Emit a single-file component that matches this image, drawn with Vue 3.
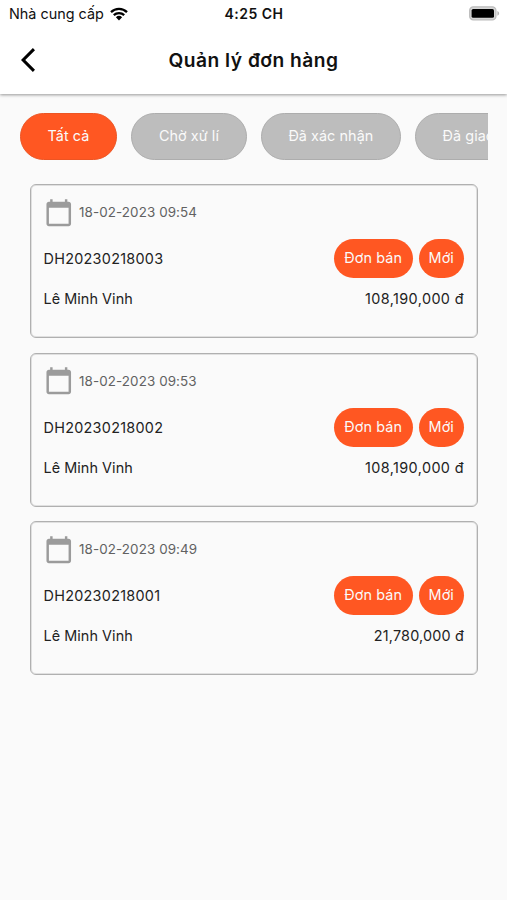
<script setup>
const filters = [
  { label: 'Tất cả', width: 97, active: true },
  { label: 'Chờ xử lí', width: 115.5 },
  { label: 'Đã xác nhận', width: 140 },
  { label: 'Đã giao', width: 107 }
]
const orders = [
  { date: '18-02-2023 09:54', code: 'DH20230218003', customer: 'Lê Minh Vinh', total: '108,190,000 đ' },
  { date: '18-02-2023 09:53', code: 'DH20230218002', customer: 'Lê Minh Vinh', total: '108,190,000 đ' },
  { date: '18-02-2023 09:49', code: 'DH20230218001', customer: 'Lê Minh Vinh', total: '21,780,000 đ' }
]
</script>

<template>
  <div class="screen">
    <header class="top">
      <div class="status">
        <div class="carrier">
          <span class="carrier-name">Nhà cung cấp</span>
          <svg class="wifi" viewBox="0 0 18 14">
            <path d="M1 5.1a11.6 11.6 0 0 1 16 0M3.8 8.1a7.6 7.6 0 0 1 10.4 0" fill="none" stroke="#000" stroke-width="2.3" />
            <path d="M5.9 10.3a4.5 4.5 0 0 1 6.2 0L9 13.4z" />
          </svg>
        </div>
        <span class="clock">4:25 CH</span>
        <div class="power">
          <svg class="battery" viewBox="0 0 31 15">
            <rect x=".7" y=".8" width="26.2" height="13" rx="3.6" fill="#d6d6d6" stroke="#bcbcbc" stroke-width="1.3" />
            <rect x="2.6" y="2.9" width="22.4" height="8.9" rx="1.6" />
            <path d="M28.4 5c2.3.8 2.3 3.9 0 4.7z" fill="#b5b5b5" />
          </svg>
        </div>
      </div>
      <div class="bar">
        <svg class="back" viewBox="0 2.1 11.67 19.8"><path d="M11.67 3.87 9.9 2.1 0 12l9.9 9.9 1.77-1.77L3.54 12z" /></svg>
        <h1 class="title">Quản lý đơn hàng</h1>
      </div>
    </header>

    <nav class="filters">
      <button v-for="f in filters" :key="f.label" class="filter" :class="{ active: f.active }" :style="{ width: f.width + 'px' }">{{ f.label }}</button>
    </nav>

    <main class="orders">
      <article v-for="o in orders" :key="o.code" class="order">
        <div class="date-row">
          <svg class="calendar" viewBox="0 0 24 24"><path d="M20 3h-1V1h-2v2H7V1H5v2H4c-1.1 0-2 .9-2 2v16c0 1.1.9 2 2 2h16c1.1 0 2-.9 2-2V5c0-1.1-.9-2-2-2zm0 18H4V8h16v13z" /></svg>
          <span class="date">{{ o.date }}</span>
        </div>
        <div class="code-row">
          <span class="code">{{ o.code }}</span>
          <span class="tag sale">Đơn bán</span>
          <span class="tag fresh">Mới</span>
        </div>
        <div class="total-row">
          <span class="customer">{{ o.customer }}</span>
          <span class="total">{{ o.total }}</span>
        </div>
      </article>
    </main>
  </div>
</template>

<style>
body {
  background: #fafafa;
}
</style>

<style scoped>
.screen {
  box-sizing: border-box;
  height: 900px;
  overflow: hidden;
  background: #fafafa;
  color: #222;
  font-family: Inter, "Liberation Sans", sans-serif;
  font-size: 14.4px;
  white-space: nowrap;
}
.top {
  height: 94px;
  background: #fff;
  box-shadow: 0 1px 3px rgba(0, 0, 0, 0.4);
}
.status {
  display: grid;
  grid-template-columns: 1fr auto 1fr;
  align-items: center;
  height: 27px;
  padding: 0 7px 0 9px;
  color: #111;
}
.carrier {
  display: flex;
  align-items: center;
  gap: 6px;
}
.carrier-name {
  font-size: 14.4px;
}
.wifi {
  width: 18px;
  height: 14px;
}
.clock {
  margin-right: 1px;
  font-size: 14px;
  font-weight: 600;
  letter-spacing: 0.5px;
}
.power {
  display: flex;
  justify-content: flex-end;
}
.battery {
  width: 31px;
  height: 15px;
}
.bar {
  display: grid;
  grid-template-columns: 60px 1fr 60px;
  align-items: center;
  height: 65px;
}
.back {
  width: 14px;
  height: 24px;
  margin-left: 21px;
}
.title {
  margin: 0;
  color: #111;
  font-size: 19.2px;
  font-weight: 600;
  letter-spacing: 0.5px;
  text-align: center;
}
.filters {
  display: flex;
  gap: 14.2px;
  margin: 19px 19px 0 20px;
  overflow: hidden;
}
.filter {
  box-sizing: border-box;
  flex: none;
  height: 47px;
  padding: 0 0 2px;
  border: 1px solid #adadad;
  border-radius: 24px;
  background: #bdbdbd;
  color: #fafafa;
  font: inherit;
  letter-spacing: 0.06px;
}
.filter.active {
  border-color: #ec5524;
  background: #ff5722;
}
.orders {
  display: flex;
  flex-direction: column;
  gap: 14.5px;
  padding: 24px 29px 0 30px;
}
.order {
  box-sizing: border-box;
  height: 154px;
  padding: 12.5px 13px 0 12.5px;
  border: 1px solid #b0b0b0;
  border-radius: 6px;
  box-shadow: inset 0 0 0 1px rgba(176, 176, 176, 0.35);
}
.date-row {
  display: flex;
  align-items: center;
  gap: 6px;
  height: 30px;
}
.calendar {
  width: 29.5px;
  height: 29.5px;
  fill: #9b9b9b;
}
.date {
  padding-bottom: 1px;
  color: #616161;
  font-size: 13.4px;
  letter-spacing: 0.1px;
}
.code-row {
  display: flex;
  align-items: center;
  gap: 6px;
  height: 39px;
  margin-top: 11.5px;
}
.code {
  flex: 1;
  letter-spacing: 0.28px;
}
.tag {
  display: flex;
  align-items: center;
  justify-content: center;
  box-sizing: border-box;
  height: 39px;
  padding-bottom: 2px;
  border-radius: 20px;
  background: #ff5722;
  color: #fafafa;
  letter-spacing: 0.1px;
}
.sale {
  width: 78.5px;
}
.fresh {
  width: 45.5px;
}
.total-row {
  display: flex;
  align-items: center;
  justify-content: space-between;
  height: 20px;
  margin-top: 10.5px;
}
.customer {
  letter-spacing: 0.06px;
}
.total {
  letter-spacing: 0.4px;
}
.order:last-child .total {
  letter-spacing: 0.18px;
}
</style>
